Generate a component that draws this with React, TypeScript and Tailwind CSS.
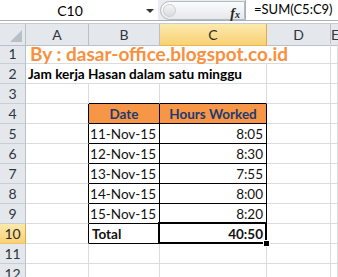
import type { ReactNode } from 'react'

type Edge = 'grid' | 'black' | 'none'

const rightEdge: Record<Edge, string> = {
  grid: 'border-r border-r-[#dadcdd]',
  black: 'border-r border-r-black',
  none: '',
}
const bottomEdge: Record<Edge, string> = {
  grid: 'border-b border-b-[#dadcdd]',
  black: 'border-b border-b-black',
  none: '',
}

const rowGrid = 'grid h-[20px] grid-cols-[26px_63px_71px_107px_64px_1fr]'

function Cell({
  r = 'grid',
  b = 'grid',
  className = '',
  children,
}: {
  r?: Edge
  b?: Edge
  className?: string
  children?: ReactNode
}) {
  return (
    <div className={`${rightEdge[r]} ${bottomEdge[b]} flex h-[20px] items-end overflow-visible whitespace-nowrap ${className}`}>
      {children}
    </div>
  )
}

function RowHead({ n, active }: { n: number; active?: boolean }) {
  if (active) {
    return (
      <div className="flex h-[20px] items-center justify-center border-r border-b border-r-[#e3a84a] border-b-[#f0c46b] bg-gradient-to-b from-[#fce9ad] to-[#f8d173] text-[14px] text-[#2b2b2b]">
        {n}
      </div>
    )
  }
  return (
    <div className="flex h-[20px] items-center justify-center border-r border-b border-r-[#b9c0c9] border-b-[#c9ced5] bg-[#e4e7ec] text-[14px] text-[#2f3540]">
      {n}
    </div>
  )
}

const dates = [
  ['11-Nov-15', '8:05'],
  ['12-Nov-15', '8:30'],
  ['13-Nov-15', '7:55'],
  ['14-Nov-15', '8:00'],
  ['15-Nov-15', '8:20'],
]

function FormulaBar() {
  return (
    <div className="flex h-[21px] border-b border-b-[#a9b0b9] bg-[#e9ecf0]">
      <div className="relative flex w-[158px] items-center bg-white">
        <span className="w-[140px] text-center text-[14px] text-black">C10</span>
        <svg className="absolute left-[146px] top-[9px]" width="8" height="4" viewBox="0 0 8 4">
          <path d="M0 0h8L4 4z" fill="#333" />
        </svg>
      </div>
      <div className="relative ml-[2px] mt-px h-[19px] w-[85px] rounded-l-full border border-[#b5bac1] bg-gradient-to-b from-[#fafbfc] to-[#e6e9ed]">
        <div className="absolute left-[2px] top-[2px] h-[13px] w-[13px] rounded-full border border-[#c9cdd2] bg-gradient-to-b from-[#f4f5f6] to-[#d9dce0]" />
        <span
          className="absolute right-[4px] top-px text-[14px] font-bold italic text-[#222]"
          style={{ fontFamily: '"Liberation Serif", serif' }}
        >
          f<span className="text-[10px]">x</span>
        </span>
      </div>
      <div className="flex flex-1 items-center border-l border-l-[#a9b0b9] bg-white pl-[8px] text-[13px] text-black">
        =SUM(C5:C9)
      </div>
    </div>
  )
}

function ColumnHeads() {
  const plain =
    'flex items-center justify-center border-r border-b border-r-[#b9c0c9] border-b-[#b9c0c9] bg-[#e4e7ec] text-[14px] text-[#2f3540]'
  return (
    <div className="grid h-[21px] grid-cols-[26px_63px_71px_107px_64px_1fr] border-t border-t-[#c7ccd3]">
      <div className="relative border-r border-b border-r-[#b9c0c9] border-b-[#b9c0c9] bg-[#e4e7ec]">
        <svg className="absolute right-[3px] bottom-[3px]" width="12" height="12" viewBox="0 0 12 12">
          <path d="M12 0V12H0z" fill="#b9bfc7" />
        </svg>
      </div>
      <div className={plain}>A</div>
      <div className={plain}>B</div>
      <div className="flex items-center justify-center border-r border-b border-r-[#e3a84a] border-b-[#e9b452] bg-gradient-to-b from-[#fce9ad] to-[#f8d173] text-[14px] text-[#2b2b2b]">
        C
      </div>
      <div className={plain}>D</div>
      <div className={plain}>E</div>
    </div>
  )
}

export default function App() {
  const body = 'text-[13.5px] leading-[18px] text-[#111]'
  const head = 'justify-center bg-[#f79646] text-[13.5px] leading-[18px] font-bold text-[#1f3a6f]'
  return (
    <div
      className="h-[277px] w-[338px] overflow-hidden bg-white"
      style={{ fontFamily: 'Lato, "Open Sans", sans-serif' }}
    >
      <FormulaBar />
      <div className="h-[2px] bg-white" />
      <ColumnHeads />

      {/* row 1: blog title spilling over A:D */}
      <div className={rowGrid}>
        <RowHead n={1} />
        <div className="col-span-4 flex h-[20px] items-end border-r border-b border-r-[#dadcdd] border-b-[#dadcdd] pl-[4px]">
          <span className="text-[19px] leading-[18px] font-bold text-[#f8903e]">By : dasar-office.blogspot.co.id</span>
        </div>
        <Cell />
      </div>

      {/* row 2 */}
      <div className={rowGrid}>
        <RowHead n={2} />
        <div className="col-span-3 flex h-[20px] items-end border-r border-b border-r-[#dadcdd] border-b-[#dadcdd] pl-[2px]">
          <span className="text-[13.6px] leading-[18px] font-bold text-black">Jam kerja Hasan dalam satu minggu</span>
        </div>
        <Cell />
        <Cell />
      </div>

      {/* row 3 */}
      <div className={rowGrid}>
        <RowHead n={3} />
        <Cell />
        <Cell b="black" />
        <Cell b="black" />
        <Cell />
        <Cell />
      </div>

      {/* row 4: table header */}
      <div className={rowGrid}>
        <RowHead n={4} />
        <Cell r="black" />
        <Cell r="black" b="black" className={head}>
          Date
        </Cell>
        <Cell r="black" b="black" className={head}>
          Hours Worked
        </Cell>
        <Cell />
        <Cell />
      </div>

      {dates.map(([d, t], i) => (
        <div key={d} className={rowGrid}>
          <RowHead n={i + 5} />
          <Cell r="black" />
          <Cell r="black" b="black" className={`justify-end pr-[3px] ${body}`}>
            {d}
          </Cell>
          <Cell r="black" b="black" className={`justify-end pr-[3px] ${body}`}>
            {t}
          </Cell>
          <Cell />
          <Cell />
        </div>
      ))}

      {/* row 10: total, active cell C10 */}
      <div className={rowGrid}>
        <RowHead n={10} active />
        <Cell r="black" />
        <Cell r="black" b="black" className={`pl-[3px] font-bold ${body}`}>
          Total
        </Cell>
        <Cell r="black" b="black" className={`relative justify-end pr-[3px] font-bold ${body}`}>
          40:50
          <div className="pointer-events-none absolute -top-[2px] -left-[2px] -right-px -bottom-px z-10 border-2 border-black" />
          <div className="absolute -right-[4px] -bottom-[4px] z-20 h-[7px] w-[7px] border border-white bg-black" />
        </Cell>
        <Cell />
        <Cell />
      </div>

      {[11, 12].map((n) => (
        <div key={n} className={rowGrid}>
          <RowHead n={n} />
          <Cell />
          <Cell />
          <Cell />
          <Cell />
          <Cell />
        </div>
      ))}
    </div>
  )
}
